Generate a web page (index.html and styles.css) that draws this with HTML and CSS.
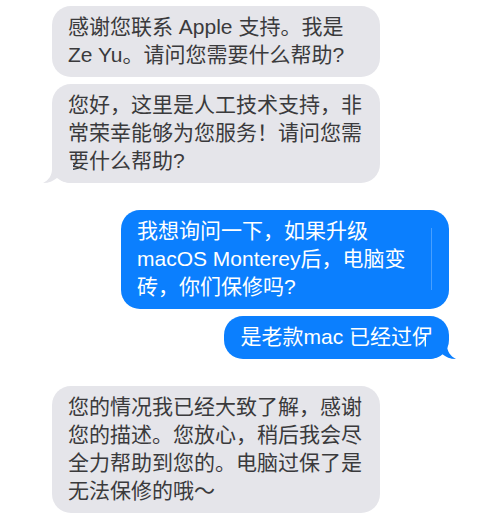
FILE: index.html
```html
<!DOCTYPE html>
<html lang="zh-CN">
<head>
    <meta charset="UTF-8">
    <meta name="viewport" content="width=device-width, initial-scale=1.0">
    <title>Messages</title>
    <link rel="stylesheet" href="styles.css">
</head>
<body>
    <div class="chat">
        <div class="bubble in wide">感谢您联系 Apple 支持。我是<br>Ze Yu。请问您需要什么帮助?</div>
        <div class="bubble in wide tail">
            您好，这里是人工技术支持，非<br>常荣幸能够为您服务！请问您需<br>要什么帮助?
            <svg class="tail-in" width="30" height="22" viewBox="0 0 30 22"><path d="M9 0 L9 8 C9 14 6 19 0 22 C6 22 10 20 14 17 C18 20 22 22 30 22 L30 0 Z"/></svg>
        </div>

        <div class="bubble out wide gap">
            我想询问一下，如果升级<br>macOS Monterey后，电脑变<br>砖，你们保修吗?
            <span class="caret"></span>
        </div>
        <div class="bubble out tail">
            是老款mac 已经过保
            <svg class="tail-out" width="30" height="22" viewBox="0 0 30 22"><path d="M21 0 L21 8 C21 14 24 19 30 22 C24 22 20 20 16 17 C12 20 8 22 0 22 L0 0 Z"/></svg>
        </div>

        <div class="bubble in wide gap">您的情况我已经大致了解，感谢<br>您的描述。您放心，稍后我会尽<br>全力帮助到您的。电脑过保了是<br>无法保修的哦～</div>
    </div>
</body>
</html>
```

FILE: styles.css
```css
body {
    margin: 0;
    background-color: #ffffff;
    font-family: "Liberation Sans", "Noto Sans CJK SC", sans-serif;
}
.chat {
    display: flex;
    flex-direction: column;
    gap: 7px;
    padding: 6px 51px 0 52px;
}
.bubble {
    position: relative;
    font-size: 21px;
    line-height: 28px;
    padding: 7px 16px 8px 16px;
    border-radius: 19px;
    white-space: nowrap;
}
.bubble.wide {
    width: 328px;
    box-sizing: border-box;
}
.bubble.gap {
    margin-top: 20px;
}
.in {
    align-self: flex-start;
    background-color: #e5e5ea;
    color: #3a3a3c;
}
.out {
    align-self: flex-end;
    background-color: #0b7ffe;
    color: #ffffff;
}
.tail-in,
.tail-out {
    position: absolute;
    bottom: 0;
}
.tail-in {
    left: -9px;
    fill: #e5e5ea;
}
.tail-out {
    right: -7px;
    fill: #0b7ffe;
}
.caret {
    position: absolute;
    right: 17px;
    top: 18px;
    width: 1px;
    height: 62px;
    background-color: rgba(255,255,255,0.25);
}
```
